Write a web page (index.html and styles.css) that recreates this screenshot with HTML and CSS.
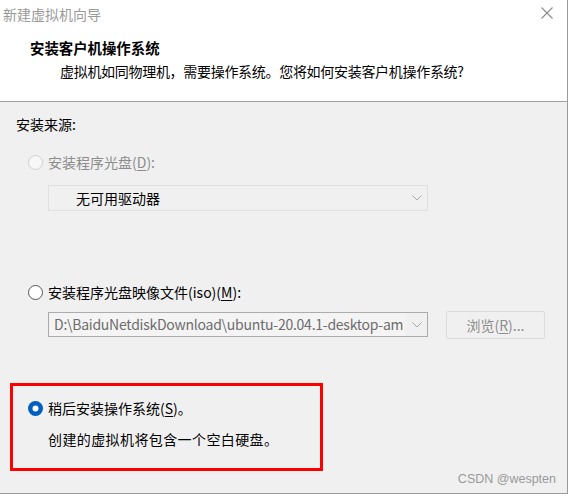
FILE: index.html
```html
<!DOCTYPE html>
<html lang="zh-CN">
<head>
<meta charset="utf-8">
<title>新建虚拟机向导</title>
<link rel="stylesheet" href="styles.css">
</head>
<body>
<div class="window">
  <div class="header">
    <div class="titlebar">
      <span class="title">新建虚拟机向导</span>
      <svg class="close" width="12" height="12" viewBox="0 0 12 12"><path d="M0.5 0.5 L11.5 11.5 M11.5 0.5 L0.5 11.5" stroke="#8a8a8a" stroke-width="1.1" fill="none"/></svg>
    </div>
    <div class="heading">安装客户机操作系统</div>
    <div class="sub">虚拟机如同物理机，需要操作系统。您将如何安装客户机操作系统?</div>
  </div>
  <div class="content">
    <div class="source">安装来源:</div>

    <div class="option disabled opt-disc">
      <span class="radio off"></span>
      <span class="label">安装程序光盘(<u>D</u>):</span>
    </div>
    <div class="select">
      <span class="select-text">无可用驱动器</span>
      <svg class="chev" width="10" height="6" viewBox="0 0 10 6"><path d="M0.5 0.5 L5 5 L9.5 0.5" stroke="#a8a8a8" stroke-width="1" fill="none"/></svg>
    </div>

    <div class="option opt-iso">
      <span class="radio"></span>
      <span class="label">安装程序光盘映像文件(iso)(<u>M</u>):</span>
    </div>
    <div class="iso-row">
      <div class="combo">
        <span class="combo-text">D:\BaiduNetdiskDownload\ubuntu-20.04.1-desktop-am</span>
        <svg class="chev" width="10" height="6" viewBox="0 0 10 6"><path d="M0.5 0.5 L5 5 L9.5 0.5" stroke="#a8a8a8" stroke-width="1" fill="none"/></svg>
      </div>
      <div class="browse">浏览(<u>R</u>)...</div>
    </div>

    <div class="later">
      <div class="option">
        <svg class="radio-on" width="15" height="15" viewBox="0 0 15 15"><circle cx="7.5" cy="7.5" r="7.5" fill="#0060c0"/><circle cx="7.5" cy="7.5" r="3" fill="#fff"/></svg>
        <span class="label">稍后安装操作系统(<u>S</u>)。</span>
      </div>
      <div class="later-desc">创建的虚拟机将包含一个空白硬盘。</div>
    </div>

    <div class="watermark">CSDN @wespten</div>
  </div>
</div>
</body>
</html>
```

FILE: styles.css
```css
html, body {
  margin: 0;
  padding: 0;
  background: #ffffff;
}
body {
  font-family: "Noto Sans CJK SC", "Noto Sans", sans-serif;
  font-size: 14px;
  color: #000;
}
.window {
  width: 567px;
  height: 493px;
  border-right: 1px solid #9a9a9a;
  border-bottom: 1px solid #9a9a9a;
  display: flex;
  flex-direction: column;
  overflow: hidden;
}
.header {
  background: #fff;
  height: 101px;
  border-bottom: 1px solid #a0a0a0;
  flex: none;
}
.titlebar {
  height: 28px;
  display: flex;
  align-items: center;
  justify-content: space-between;
  padding: 0 14px 0 3px;
}
.title {
  color: #9a9a9a;
  font-size: 14px;
  line-height: 28px;
}
.close {
  display: block;
  margin-top: -2px;
}
.heading {
  margin-top: 10px;
  padding-left: 30px;
  font-weight: bold;
  font-size: 14.4px;
  line-height: 20px;
}
.sub {
  margin-top: 3px;
  padding-left: 60px;
  line-height: 20px;
  letter-spacing: -0.3px;
}
.content {
  flex: 1;
  background: #f0f0f0;
  padding: 12px 0 0 0;
  display: flex;
  flex-direction: column;
}
.source {
  padding-left: 16px;
  line-height: 20px;
}
.option {
  display: flex;
  align-items: center;
  line-height: 20px;
  padding-left: 28px;
  gap: 5px;
}
.opt-disc { margin-top: 18px; }
.opt-iso { margin-top: 71px; }
.disabled { color: #8c8c8c; }
.radio {
  width: 13px;
  height: 13px;
  border-radius: 50%;
  border: 1px solid #555;
  background: #fff;
  flex: none;
}
.radio.off {
  border-color: #cfcfcf;
  background: #f7f7f7;
}
.radio-on { display: block; flex: none; }
u { text-decoration: underline; text-underline-offset: 2px; }
.select {
  margin: 13px 0 0 48px;
  width: 378px;
  height: 24px;
  border: 1px solid #e0e0e0;
  background: #f0f0f0;
  display: flex;
  align-items: center;
  justify-content: space-between;
}
.select-text {
  padding-left: 27px;
  line-height: 24px;
}
.chev {
  display: block;
  margin-right: 5px;
  flex: none;
}
.iso-row {
  margin: 10px 0 0 48px;
  display: flex;
  align-items: flex-start;
  gap: 18px;
}
.combo {
  width: 378px;
  height: 23px;
  border: 1px solid #acacac;
  background: #f0f0f0;
  display: flex;
  align-items: center;
}
.combo-text {
  width: 351px;
  margin-left: 1px;
  padding-left: 4px;
  overflow: hidden;
  white-space: nowrap;
  color: #6d6d6d;
  line-height: 23px;
  background: #f4f4f4;
  flex: none;
  letter-spacing: -0.25px;
}
.combo .chev { margin-left: auto; margin-right: 5px; }
.browse {
  width: 99px;
  height: 28px;
  box-sizing: border-box;
  border: 1px solid #dcdcdc;
  border-radius: 2px;
  background: #f0f0f0;
  color: #8c8c8c;
  text-align: center;
  line-height: 26px;
  margin-top: -1px;
}
.later {
  margin: 44px 0 0 10px;
  width: 307px;
  height: 82px;
  border: 3px solid #ff0000;
  display: flex;
  flex-direction: column;
}
.later .option {
  padding-left: 15px;
  margin-top: 12px;
}
.later-desc {
  padding-left: 35px;
  margin-top: 11px;
  line-height: 20px;
  letter-spacing: 0.4px;
}
.watermark {
  align-self: flex-end;
  margin: 1px 11px 0 0;
  font-family: "Liberation Sans", Arial, sans-serif;
  font-size: 12.5px;
  color: #9a9a9a;
  line-height: 14px;
}
```
